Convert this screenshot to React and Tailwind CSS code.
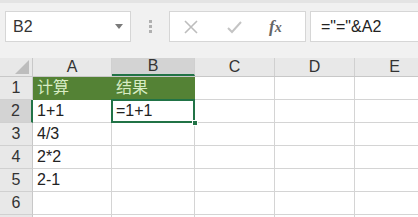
import React from 'react';

const FONT = { fontFamily: '"Liberation Sans", "Noto Sans CJK SC", sans-serif' };

const cols = [
  { key: 'A', w: 'w-[79px]' },
  { key: 'B', w: 'w-[83px]' },
  { key: 'C', w: 'w-[80px]' },
  { key: 'D', w: 'w-[80px]' },
  { key: 'E', w: 'w-[80px]' },
];

const rows = [
  { n: 1, a: '计算', b: '结果', head: true },
  { n: 2, a: '1+1', b: '=1+1', sel: true },
  { n: 3, a: '4/3' },
  { n: 4, a: '2*2' },
  { n: 5, a: '2-1' },
  { n: 6 },
  { n: '' },
];

const Toolbar = () => (
  <div className="h-[58px] bg-[#f1f1f1] border-t-[3px] border-[#e4e4e4] flex items-start pt-[8px] pl-[5px]">
    <div className="w-[126px] h-[31px] bg-white border border-[#d6d6d6] flex items-center justify-between pl-[7px] pr-[7px]">
      <span className="text-[16px] text-[#333]">B2</span>
      <svg width="8" height="5" viewBox="0 0 8 5"><path d="M0 0h8L4 5z" fill="#7a7a7a" /></svg>
    </div>
    <div className="w-[38px] h-[31px] flex flex-col items-center justify-center gap-[2px]">
      <span className="w-[3px] h-[3px] bg-[#b0b0b0]" />
      <span className="w-[3px] h-[3px] bg-[#b0b0b0]" />
      <span className="w-[3px] h-[3px] bg-[#b0b0b0]" />
    </div>
    <div className="w-[137px] h-[31px] bg-white border border-[#d6d6d6] flex items-center pl-[13px]">
      <svg width="16" height="16" viewBox="0 0 16 16"><path d="M2 2L14 14M14 2L2 14" stroke="#bdbdbd" strokeWidth="1.6" /></svg>
      <svg className="ml-[27px]" width="16" height="16" viewBox="0 0 16 16"><path d="M2 9L6 13L15 3" stroke="#c4c4c4" strokeWidth="2" fill="none" /></svg>
      <span className="ml-[27px] text-[17px] italic font-bold text-[#666]" style={{ fontFamily: '"Liberation Serif", serif' }}>f<span className="text-[14px]">x</span></span>
    </div>
    <div className="ml-[4px] flex-1 h-[31px] bg-white border border-[#d6d6d6] border-r-0 flex items-center pl-[10px]">
      <span className="text-[16px] text-[#222]">="="&amp;A2</span>
    </div>
  </div>
);

const HeaderRow = () => (
  <div className="flex h-[19px] bg-[#e8e8e8] border-b border-[#c8c8c8]">
    <div className="w-[33px] shrink-0 relative border-r border-[#c8c8c8]">
      <svg className="absolute right-[3px] bottom-[2px]" width="14" height="14" viewBox="0 0 14 14"><path d="M14 0V14H0z" fill="#bdbdbd" /></svg>
    </div>
    {cols.map((c) => (
      <div
        key={c.key}
        className={`${c.w} shrink-0 flex items-center justify-center text-[16px] text-[#333] border-r border-[#d0d0d0] ${c.key === 'B' ? 'bg-[#d3d3d3] border-b-2 border-b-[#217346]' : ''}`}
      >
        {c.key}
      </div>
    ))}
  </div>
);

const Row = ({ r }) => (
  <div className="flex h-[23px]">
    <div
      className={`w-[33px] shrink-0 flex items-center justify-center text-[16px] text-[#333] border-b border-[#d0d0d0] ${r.sel ? 'bg-[#d3d3d3] border-r-2 border-r-[#217346]' : 'bg-[#e8e8e8] border-r border-r-[#c8c8c8]'}`}
    >
      {r.n}
    </div>
    {cols.map((c) => {
      const val = c.key === 'A' ? r.a : c.key === 'B' ? r.b : null;
      const isSel = r.sel && c.key === 'B';
      return (
        <div
          key={c.key}
          className={`${c.w} shrink-0 relative flex items-center pl-[4px] text-[16px] border-b border-r ${isSel ? 'z-10' : ''} ${r.head && (c.key === 'A' || c.key === 'B') ? 'bg-[#548235] text-[#d8ecc4] border-[#548235]' : 'bg-white text-[#222] border-[#d4d4d4]'}`}
        >
          {val}
          {isSel && (
            <>
              <div className="absolute -left-[1px] -top-[1px] right-[-1px] bottom-[-1px] border-2 border-[#217346]" />
              <div className="absolute right-[-4px] bottom-[-4px] w-[6px] h-[6px] bg-[#217346] border border-white" />
            </>
          )}
        </div>
      );
    })}
  </div>
);

export default function App() {
  return (
    <div className="w-[418px] h-[217px] overflow-hidden bg-white" style={FONT}>
      <Toolbar />
      <HeaderRow />
      {rows.map((r, i) => (
        <Row key={i} r={r} />
      ))}
    </div>
  );
}
